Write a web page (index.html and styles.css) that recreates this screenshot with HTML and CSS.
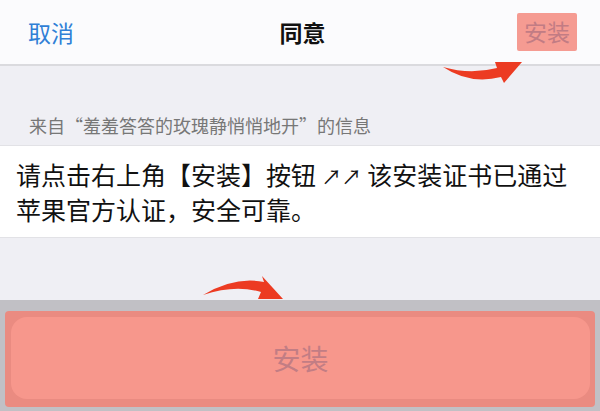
FILE: index.html
```html
<!DOCTYPE html>
<html lang="zh-CN">
<head>
    <meta charset="UTF-8">
    <meta name="viewport" content="width=device-width, initial-scale=1.0">
    <title>同意</title>
    <link rel="stylesheet" href="styles.css">
</head>
<body>
    <div class="page">
        <div class="navbar">
            <span class="nav-cancel">取消</span>
            <span class="nav-title">同意</span>
            <span class="nav-install">安装</span>
        </div>

        <svg class="arrow arrow-top" width="90" height="32" viewBox="0 0 90 32">
            <path d="M3 11 Q30 19 57 12 L55 6 L82 6 L64 27 L61 21 Q30 29 3 11 Z" fill="#ec3b22"/>
        </svg>

        <div class="caption">来自“羞羞答答的玫瑰静悄悄地开”的信息</div>

        <div class="message">
            请点击右上角【安装】按钮 <span class="mini-arrows">↗↗</span> 该安装证书已通过<br>
            苹果官方认证，安全可靠。
        </div>

        <div class="spacer">
            <svg class="arrow arrow-bottom" width="90" height="32" viewBox="0 0 90 32">
                <path d="M3 23 Q35 4 64 10 L62 4 L83 27 L58 27 L61 20 Q35 12 3 23 Z" fill="#ec3b22"/>
            </svg>
        </div>

        <div class="action-bar">
            <div class="install-btn">
                <div class="install-inner">安装</div>
            </div>
        </div>
    </div>
</body>
</html>
```

FILE: styles.css
```css
body {
    margin: 0;
    font-family: "Noto Sans CJK SC", "Noto Sans", sans-serif;
    background-color: #efeff4;
}
.page {
    position: relative;
    width: 600px;
    height: 411px;
    overflow: hidden;
    display: flex;
    flex-direction: column;
}
.navbar {
    height: 64px;
    background: #fbfbfd;
    border-bottom: 2px solid #dadade;
    display: grid;
    grid-template-columns: 1fr auto 1fr;
    align-items: center;
    padding: 0 23px 0 28px;
    font-size: 23px;
}
.nav-cancel {
    color: #2f7fd6;
}
.nav-title {
    color: #111;
    font-weight: 700;
}
.nav-install {
    justify-self: end;
    background: #f59b92;
    color: #c27c84;
    padding: 1px 7px 3px;
    border-radius: 2px;
}

.caption {
    padding: 47px 29px 8px;
    font-size: 18px;
    line-height: 24px;
    color: #777;
}
.message {
    background: white;
    border-top: 1px solid #e2e2e6;
    border-bottom: 1px solid #e2e2e6;
    padding: 12px 16px;
    font-size: 25px;
    line-height: 32px;
    color: #111;
}
.mini-arrows {
    font-size: 20px;
}
.spacer {
    flex: 1;
    position: relative;
}

.arrow {
    position: absolute;
}
.arrow-top {
    left: 440px;
    top: 56px;
}
.arrow-bottom {
    left: 200px;
    top: 34px;
}

.action-bar {
    height: 111px;
    box-sizing: border-box;
    background: #c1c0c5;
    padding: 11px 5px 4px;
}
.install-btn {
    height: 100%;
    box-sizing: border-box;
    background: #ea8b81;
    border-radius: 4px;
    padding: 6px 5px 8px 6px;
}
.install-inner {
    height: 100%;
    background: #f7978c;
    border-radius: 16px;
    display: flex;
    align-items: center;
    justify-content: center;
    font-size: 28px;
    color: #c27d84;
}
```
